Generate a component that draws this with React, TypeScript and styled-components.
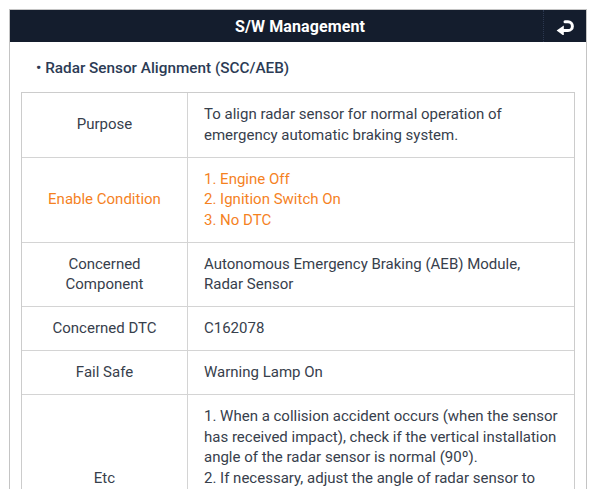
import React from "react";
import styled, { createGlobalStyle } from "styled-components";

const Global = createGlobalStyle`
  html, body { margin: 0; padding: 0; background: #ffffff; }
  body { font-family: Roboto, "Liberation Sans", Arial, sans-serif; }
`;

const Panel = styled.div`
  margin: 9px 10px 0 9px;
  width: 578px;
  height: 480px;
  overflow: hidden;
  box-sizing: border-box;
  border: 1px solid #c4c4c4;
  border-bottom: none;
  background: #ffffff;
`;

const Header = styled.header`
  display: flex;
  align-items: stretch;
  height: 32px;
  background: #141d2d;
`;

const Title = styled.h1`
  flex: 1;
  margin: 0;
  padding-left: 47px;
  display: flex;
  align-items: center;
  justify-content: center;
  color: #ffffff;
  font-size: 16px;
  font-weight: 700;
  letter-spacing: 0.1px;
`;

const BackButton = styled.button`
  width: 43px;
  border: none;
  border-left: 1px dotted #2c3850;
  background: transparent;
  display: flex;
  align-items: center;
  justify-content: center;
  padding: 0;
  cursor: pointer;
`;

const Body = styled.main`
  padding: 0 11px 0 11px;
`;

const SectionTitle = styled.h2`
  margin: 0;
  padding: 16px 0 14px 15px;
  font-size: 15.3px;
  line-height: 20px;
  font-weight: 500;
  color: #2c3b55;
`;

const Table = styled.div`
  display: grid;
  grid-template-columns: 166px 1fr;
  border: 1px solid #cccccc;
  border-bottom: none;
`;

const LabelCell = styled.div<{ $accent?: boolean }>`
  display: flex;
  align-items: center;
  justify-content: center;
  text-align: center;
  padding: 11px 8px 11.5px;
  border-right: 1px solid #d4d4d4;
  border-bottom: 1px solid #d4d4d4;
  font-size: 15px;
  line-height: 20.5px;
  color: ${(p) => (p.$accent ? "#f5821f" : "#37404c")};
`;

const ValueCell = styled.div<{ $accent?: boolean }>`
  padding: 11px 6px 11.5px 16px;
  border-bottom: 1px solid #d4d4d4;
  font-size: 15px;
  line-height: 20.5px;
  color: ${(p) => (p.$accent ? "#f5821f" : "#37404c")};
  display: flex;
  flex-direction: column;
  justify-content: center;
  white-space: nowrap;
  overflow: hidden;
`;

const Line = styled.span`
  display: block;
`;

const BackIcon = () => (
  <svg width="20" height="17" viewBox="0 0 20 17" fill="none">
    <path
      d="M8 12.6 H13 a4.4 4.4 0 0 0 0 -8.8 H10"
      stroke="#ffffff"
      strokeWidth="3"
      strokeLinecap="round"
      strokeLinejoin="round"
    />
    <path d="M1.6 12.6 L8.8 7.4 L8.8 17.8 Z" fill="#ffffff" />
  </svg>
);

const rows: { label: string; value: string[]; accent?: boolean }[] = [
  {
    label: "Purpose",
    value: [
      "To align radar sensor for normal operation of",
      "emergency automatic braking system.",
    ],
  },
  {
    label: "Enable Condition",
    value: ["1. Engine Off", "2. Ignition Switch On", "3. No DTC"],
    accent: true,
  },
  {
    label: "Concerned Component",
    value: ["Autonomous Emergency Braking (AEB) Module,", "Radar Sensor"],
  },
  { label: "Concerned DTC", value: ["C162078"] },
  { label: "Fail Safe", value: ["Warning Lamp On"] },
  {
    label: "Etc",
    value: [
      "1. When a collision accident occurs (when the sensor",
      "has received impact), check if the vertical installation",
      "angle of the radar sensor is normal (90º).",
      "2. If necessary, adjust the angle of radar sensor to",
      "the normal position and then perform the radar",
      "sensor alignment procedure with the alignment",
      "equipment.",
    ],
  },
];

export default function App() {
  return (
    <>
      <Global />
      <Panel>
        <Header>
          <Title>S/W Management</Title>
          <BackButton aria-label="Back">
            <BackIcon />
          </BackButton>
        </Header>
        <Body>
          <SectionTitle>• Radar Sensor Alignment (SCC/AEB)</SectionTitle>
          <Table>
            {rows.map((r) => (
              <React.Fragment key={r.label}>
                <LabelCell $accent={r.accent}>
                  {r.label === "Concerned Component" ? (
                    <span>
                      Concerned
                      <br />
                      Component
                    </span>
                  ) : (
                    r.label
                  )}
                </LabelCell>
                <ValueCell $accent={r.accent}>
                  {r.value.map((v) => (
                    <Line key={v}>{v}</Line>
                  ))}
                </ValueCell>
              </React.Fragment>
            ))}
          </Table>
        </Body>
      </Panel>
    </>
  );
}
